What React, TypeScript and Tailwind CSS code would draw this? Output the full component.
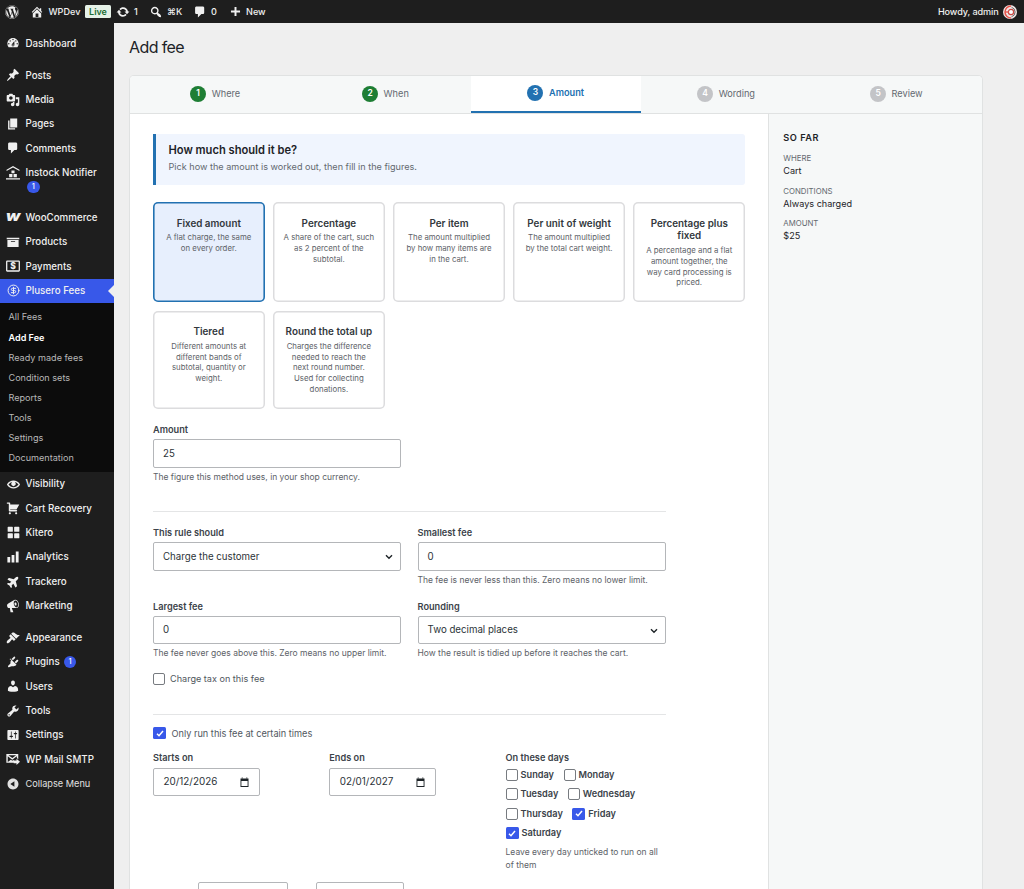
import type { ReactNode } from "react";
import { CircleDollarSign } from "lucide-react";
import { FaPlane, FaWordpress } from "react-icons/fa6";

const PATHS = {
  dashboard:
    "M3.76 16h12.48c1.1-1.37 1.76-3.11 1.76-5 0-4.42-3.58-8-8-8s-8 3.58-8 8c0 1.89.66 3.63 1.76 5zM10 4c.55 0 1 .45 1 1s-.45 1-1 1-1-.45-1-1 .45-1 1-1zM6 6c.55 0 1 .45 1 1s-.45 1-1 1-1-.45-1-1 .45-1 1-1zm8 0c.55 0 1 .45 1 1s-.45 1-1 1-1-.45-1-1 .45-1 1-1zm-5.37 5.55L12 7v6c0 1.1-.9 2-2 2s-2-.9-2-2c0-.57.24-1.08.63-1.45zM4 10c.55 0 1 .45 1 1s-.45 1-1 1-1-.45-1-1 .45-1 1-1zm12 0c.55 0 1 .45 1 1s-.45 1-1 1-1-.45-1-1 .45-1 1-1zm-5 3c0-.55-.45-1-1-1s-1 .45-1 1 .45 1 1 1 1-.45 1-1z",
  post: "M10.44 3.02l1.82-1.82 6.36 6.35-1.83 1.82c-1.05-.68-2.48-.57-3.41.36l-.75.75c-.92.93-1.04 2.35-.35 3.41l-1.83 1.82-2.41-2.41-2.8 2.79c-.42.42-3.38 2.71-3.8 2.29s1.86-3.39 2.28-3.81l2.79-2.79L4.1 9.36l1.83-1.82c1.05.69 2.48.57 3.4-.36l.75-.75c.93-.92 1.05-2.35.36-3.41z",
  media:
    "M13 11V4c0-.55-.45-1-1-1h-1.67L9 1H5L3.67 3H2c-.55 0-1 .45-1 1v7c0 .55.45 1 1 1h10c.55 0 1-.45 1-1zM7 4.5c1.38 0 2.5 1.12 2.5 2.5S8.38 9.5 7 9.5 4.5 8.38 4.5 7 5.62 4.5 7 4.5zM14 6h5v10.5c0 1.38-1.12 2.5-2.5 2.5S14 17.88 14 16.5s1.12-2.5 2.5-2.5c.17 0 .34.02.5.05V9h-3V6zm-4 8.05V13h2v3.5c0 1.38-1.12 2.5-2.5 2.5S7 17.88 7 16.5 8.12 14 9.5 14c.17 0 .34.02.5.05z",
  page: "M6 15V2h10v13H6zm-1 1h8v2H3V5h2v11z",
  comments:
    "M5 2h9c1.1 0 2 .9 2 2v7c0 1.1-.9 2-2 2h-2l-5 5v-5H5c-1.1 0-2-.9-2-2V4c0-1.1.9-2 2-2z",
  store: "M10 0L.8 5.2v2L10 2.3l9.2 4.9v-2zM7.8 6.5h4.4v4H7.8zM4.5 11.5h4.7V16H4.5zM10.8 11.5h4.7V16h-4.7zM0 17.5h20v1.8H0z",
  archive: "M19 4v2H1V4h18zM2 7h16v10H2V7zm11 3V9H7v1h6z",
  visibility:
    "M19.7 9.4C17.7 6 14 3.9 10 3.9S2.3 6 .3 9.4L0 10l.3.6c2 3.4 5.7 5.5 9.7 5.5s7.7-2.1 9.7-5.5l.3-.6-.3-.6zM10 14.1c-3.1 0-6-1.6-7.7-4.1C3.6 8 5.7 6.6 8 6.1c-.9.6-1.5 1.7-1.5 2.9 0 1.9 1.6 3.5 3.5 3.5s3.5-1.6 3.5-3.5c0-1.2-.6-2.3-1.5-2.9 2.3.5 4.4 1.9 5.7 3.9-1.7 2.5-4.6 4.1-7.7 4.1z",
  cart: "M6 13h9c.55 0 1 .45 1 1s-.45 1-1 1H5c-.55 0-1-.45-1-1V4H2c-.55 0-1-.45-1-1s.45-1 1-1h3c.55 0 1 .45 1 1v2h13l-4 7H6v1zm-.5 3c.83 0 1.5.67 1.5 1.5S6.33 19 5.5 19 4 18.33 4 17.5 4.67 16 5.5 16zm9 0c.83 0 1.5.67 1.5 1.5s-.67 1.5-1.5 1.5-1.5-.67-1.5-1.5.67-1.5 1.5-1.5z",
  grid: "M2 1h6c.55 0 1 .45 1 1v6c0 .55-.45 1-1 1H2c-.55 0-1-.45-1-1V2c0-.55.45-1 1-1zm10 0h6c.55 0 1 .45 1 1v6c0 .55-.45 1-1 1h-6c-.55 0-1-.45-1-1V2c0-.55.45-1 1-1zM2 11h6c.55 0 1 .45 1 1v6c0 .55-.45 1-1 1H2c-.55 0-1-.45-1-1v-6c0-.55.45-1 1-1zm10 0h6c.55 0 1 .45 1 1v6c0 .55-.45 1-1 1h-6c-.55 0-1-.45-1-1v-6c0-.55.45-1 1-1z",
  bars: "M18 18V2h-4v16h4zm-6 0V7H8v11h4zm-6 0v-8H2v8h4z",
  megaphone:
    "M18.15 5.94c.46 1.62.38 3.22-.02 4.48-.42 1.28-1.26 2.18-2.3 2.48-.16.06-.26.06-.4.06-.06.02-.12.02-.18.02-.06.02-.14.02-.22.02h-6.8l2.22 5.5c.02.14-.06.26-.14.34-.08.1-.24.16-.34.16H6.95c-.1 0-.26-.06-.34-.16-.08-.08-.16-.2-.14-.34l-1-5.5H4.25l-.02-.02c-.5.06-1.08-.18-1.54-.62s-.88-1.08-1.06-1.88c-.24-.8-.2-1.56-.02-2.2.18-.62.58-1.08 1.06-1.3l.02-.02 9-5.4c.1-.06.18-.1.24-.16.06-.04.14-.08.24-.12.16-.08.28-.12.5-.18 1.04-.3 2.24.1 3.22.98s1.84 2.24 2.26 3.86zm-2.58 5.98h-.02c.4-.1.74-.34 1.04-.7.58-.7.86-1.76.86-3.04 0-.64-.1-1.3-.28-1.98-.34-1.36-1.02-2.5-1.78-3.24s-1.68-1.1-2.46-.88c-.82.22-1.4.96-1.7 2-.32 1.04-.28 2.36.06 3.72.38 1.36 1 2.5 1.8 3.24.78.74 1.62 1.1 2.48.88zm-2.54-7.08c.22-.04.42-.02.62.04.38.16.76.48 1.02 1s.42 1.2.42 1.78c0 .3-.04.56-.12.8-.18.48-.44.84-.86.94-.34.1-.8-.06-1.14-.4s-.64-.86-.78-1.5c-.18-.62-.12-1.24.02-1.72s.48-.84.82-.94z",
  appearance:
    "M14.48 11.06L7.41 3.99l1.5-1.5c.5-.56 2.3-.47 3.51.32 1.21.8 1.43 1.28 2.91 2.1 1.18.64 2.45 1.26 4.45.85zm-.71.71L6.7 4.7 4.93 6.47c-.39.39-.39 1.02 0 1.41l1.06 1.06c.39.39.39 1.03 0 1.42-.6.6-1.43 1.11-2.21 1.69-.35.26-.7.53-1.01.84C1.43 14.23.4 16.08 1.4 17.07c.99 1 2.84-.03 4.18-1.36.31-.31.58-.66.85-1.02.57-.78 1.08-1.61 1.69-2.21.39-.39 1.02-.39 1.41 0l1.06 1.06c.39.39 1.02.39 1.41 0z",
  plugins:
    "M13.11 4.36L9.87 7.6 8 5.73l3.24-3.24c.35-.34 1.05-.2 1.56.32.52.51.66 1.21.31 1.55zm-8 1.77l.91-1.12 9.01 9.01-1.19.84c-.71.71-2.63 1.16-3.82 1.16H8.14L4.9 17.26c-.49.49-1.27.49-1.76 0s-.49-1.27 0-1.76l3.24-3.24v-1.88c0-1.18.4-2.57 1.11-3.28zm7.26 3.97l3.24-3.24c.34-.35 1.04-.21 1.55.31.52.51.66 1.21.31 1.55l-3.24 3.25z",
  users:
    "M10 9.25c-2.27 0-2.73-3.44-2.73-3.44C7 4.02 7.82 2 9.97 2c2.16 0 2.98 2.02 2.71 3.81 0 0-.41 3.44-2.68 3.44zm0 2.57L12.72 10c2.39 0 4.52 2.33 4.52 4.53v2.49s-3.65 1.13-7.24 1.13c-3.65 0-7.24-1.13-7.24-1.13v-2.49c0-2.25 1.94-4.48 4.47-4.48z",
  tools:
    "M16.68 9.77c-1.34 1.34-3.3 1.67-4.95.99l-5.41 6.52c-.99.99-2.59.99-3.58 0s-.99-2.59 0-3.57l6.52-5.42c-.68-1.65-.35-3.61.99-4.95 1.28-1.28 3.12-1.62 4.72-1.06l-2.89 2.89 2.82 2.82 2.86-2.87c.53 1.58.18 3.39-1.08 4.65zM3.81 16.21c.4.39 1.04.39 1.43 0 .4-.4.4-1.04 0-1.43-.39-.4-1.03-.4-1.43 0-.39.39-.39 1.03 0 1.43z",
  settings:
    "M18 16V4c0-.55-.45-1-1-1H3c-.55 0-1 .45-1 1v12c0 .55.45 1 1 1h14c.55 0 1-.45 1-1zM8 11h1c.55 0 1 .45 1 1s-.45 1-1 1H8v1.5c0 .28-.22.5-.5.5s-.5-.22-.5-.5V13H6c-.55 0-1-.45-1-1s.45-1 1-1h1V5.5c0-.28.22-.5.5-.5s.5.22.5.5V11zm5-2h-1c-.55 0-1-.45-1-1s.45-1 1-1h1V5.5c0-.28.22-.5.5-.5s.5.22.5.5V7h1c.55 0 1 .45 1 1s-.45 1-1 1h-1v5.5c0 .28-.22.5-.5.5s-.5-.22-.5-.5V9z",
  mail: "M.5 3h17v7.5l-2-2V6.2L9 11.2 2.5 6.2v8L7 11l2 1.4 2-1.2v4.3H.5zM3.5 4.5L9 8.7l5.5-4.2zM15 9.5l5 4.5-5 4.5V16h-4v-4h4z",
  collapse:
    "M10 2.16c4.33 0 7.84 3.51 7.84 7.84s-3.51 7.84-7.84 7.84S2.16 14.33 2.16 10 5.71 2.16 10 2.16zm2 11.72V6.12L6.18 9.97z",
  home: "M16 8.5l1.53 1.53-1.06 1.06L10 4.6l-6.47 6.49-1.06-1.06L10 2.5l4 4v-2h2v4zm-6-2.46l6 5.99V18H4v-5.97zM12 17v-5H8v5h4z",
  update:
    "M10.2 3.28c3.53 0 6.43 2.61 6.92 6h2.08l-3.5 4-3.5-4h2.32c-.45-1.97-2.21-3.45-4.32-3.45-1.45 0-2.73.71-3.54 1.78L4.95 5.66C6.23 4.2 8.11 3.28 10.2 3.28zm-.4 13.44c-3.52 0-6.43-2.61-6.92-6H.8l3.5-4c1.17 1.33 2.33 2.67 3.5 4H5.48c.45 1.97 2.21 3.45 4.32 3.45 1.45 0 2.73-.71 3.54-1.78l1.71 1.95c-1.28 1.46-3.15 2.38-5.25 2.38z",
  search:
    "M12.14 4.18c1.87 1.87 2.11 4.75.72 6.89.12.1.22.21.36.31.2.16.47.36.81.59.34.24.56.39.66.47.42.31.73.57.94.78.32.32.6.65.84 1 .25.35.44.69.59 1.04.14.35.21.68.18 1-.02.32-.14.59-.36.81s-.49.34-.81.36c-.31.02-.65-.04-.99-.19-.35-.14-.7-.34-1.04-.59-.35-.24-.68-.52-1-.84-.21-.21-.47-.52-.77-.93-.1-.13-.25-.35-.47-.66-.22-.32-.4-.57-.56-.78-.16-.2-.29-.35-.44-.5-2.07 1.09-4.69.76-6.44-.98-2.14-2.15-2.14-5.64 0-7.78 2.15-2.15 5.63-2.15 7.78 0zm-1.41 6.36c1.36-1.37 1.36-3.58 0-4.95-1.37-1.37-3.59-1.37-4.95 0-1.37 1.37-1.37 3.58 0 4.95 1.36 1.37 3.58 1.37 4.95 0z",
  plus: "M17 8.5v3h-5.5V17h-3v-5.5H3v-3h5.5V3h3v5.5H17z",
};

function Dashicon({ name, size = 14 }: { name: keyof typeof PATHS; size?: number }) {
  return (
    <svg width={size} height={size} viewBox="0 0 20 20" fill="currentColor" fillRule="evenodd" className="shrink-0">
      <path d={PATHS[name]} />
    </svg>
  );
}

function WooMark() {
  return <span className="scale-x-[1.25] text-center text-[11px] leading-none font-black italic">W</span>;
}

function PaymentsMark() {
  return (
    <svg width="14" height="12" viewBox="0 0 14 12" fill="currentColor">
      <rect x="0.7" y="1.2" width="12.6" height="9.8" rx="0.5" fill="none" stroke="currentColor" strokeWidth="1.3" />
      <text x="7" y="9.2" textAnchor="middle" fontSize="8.5" fontWeight="800">
        $
      </text>
    </svg>
  );
}

function Badge() {
  return (
    <span className="flex h-[12.5px] w-[12.5px] items-center justify-center rounded-full bg-[#3858e9] text-[7.5px] leading-none font-medium text-white">
      1
    </span>
  );
}

function MenuItem({ icon, label, badge }: { icon: ReactNode; label: string; badge?: boolean }) {
  return (
    <a className="flex h-[24.3px] items-center text-[9.75px] font-medium text-[#f0f0f0]">
      <span className="mr-[5.5px] ml-[6px] flex w-[14px] justify-center">{icon}</span>
      <span className="pt-[1.2px] whitespace-nowrap">{label}</span>
      {badge && (
        <span className="ml-[4px]">
          <Badge />
        </span>
      )}
    </a>
  );
}

const SUBMENU = [
  "All Fees",
  "Add Fee",
  "Ready made fees",
  "Condition sets",
  "Reports",
  "Tools",
  "Settings",
  "Documentation",
];

function Sidebar() {
  return (
    <aside className="w-[113.5px] shrink-0 bg-[#1e1e1e] pt-[8.2px]">
      <MenuItem icon={<Dashicon name="dashboard" />} label="Dashboard" />
      <div className="h-[7.8px]" />
      <MenuItem icon={<Dashicon name="post" />} label="Posts" />
      <MenuItem icon={<Dashicon name="media" />} label="Media" />
      <MenuItem icon={<Dashicon name="page" />} label="Pages" />
      <MenuItem icon={<Dashicon name="comments" />} label="Comments" />
      <div className="h-[37.4px]">
        <MenuItem icon={<Dashicon name="store" />} label="Instock Notifier" />
        <div className="-mt-[4px] pl-[27px]">
          <Badge />
        </div>
      </div>
      <div className="h-[7.8px]" />
      <MenuItem icon={<WooMark />} label="WooCommerce" />
      <MenuItem icon={<Dashicon name="archive" />} label="Products" />
      <MenuItem icon={<PaymentsMark />} label="Payments" />
      <div className="relative bg-[#3858e9]">
        <MenuItem icon={<CircleDollarSign size={13} strokeWidth={1.8} />} label="Plusero Fees" />
        <span className="absolute top-[6.5px] right-0 border-y-[6px] border-r-[6px] border-y-transparent border-r-[#efefef]" />
      </div>
      <ul className="h-[169.2px] bg-[#0c0c0c] pt-[4.4px]">
        {SUBMENU.map((item) => (
          <li
            key={item}
            className={`flex h-[20.1px] items-center pl-[8.5px] text-[9.1px] ${
              item === "Add Fee" ? "font-semibold text-white" : "text-[#b8b8b8]"
            }`}
          >
            {item}
          </li>
        ))}
      </ul>
      <MenuItem icon={<Dashicon name="visibility" size={13} />} label="Visibility" />
      <MenuItem icon={<Dashicon name="cart" />} label="Cart Recovery" />
      <MenuItem icon={<Dashicon name="grid" size={13} />} label="Kitero" />
      <MenuItem icon={<Dashicon name="bars" />} label="Analytics" />
      <MenuItem icon={<FaPlane size={13} className="-rotate-45" />} label="Trackero" />
      <MenuItem icon={<Dashicon name="megaphone" />} label="Marketing" />
      <div className="h-[7.8px]" />
      <MenuItem icon={<Dashicon name="appearance" />} label="Appearance" />
      <MenuItem icon={<Dashicon name="plugins" />} label="Plugins" badge />
      <MenuItem icon={<Dashicon name="users" />} label="Users" />
      <MenuItem icon={<Dashicon name="tools" />} label="Tools" />
      <MenuItem icon={<Dashicon name="settings" />} label="Settings" />
      <MenuItem icon={<Dashicon name="mail" />} label="WP Mail SMTP" />
      <a className="flex h-[24.3px] items-center text-[9.2px] text-[#e0e0e0]">
        <span className="mr-[5.5px] ml-[6px] flex w-[14px] justify-center">
          <Dashicon name="collapse" />
        </span>
        Collapse Menu
      </a>
    </aside>
  );
}

function AdminBar() {
  return (
    <header className="flex h-[23px] shrink-0 items-center bg-[#1e1e1e] text-[9.1px] font-medium text-[#f0f0f0]">
      <FaWordpress size={14} className="ml-[5px]" />
      <span className="ml-[11px] flex">
        <Dashicon name="home" />
      </span>
      <span className="ml-[4.5px] w-[32px]">WPDev</span>
      <span className="ml-[4.5px] flex h-[12.5px] w-[26px] items-center justify-center rounded-[1.5px] bg-[#e6f2e8] text-[9px] font-semibold text-[#1c6e33]">
        Live
      </span>
      <span className="ml-[5px] flex">
        <Dashicon name="update" />
      </span>
      <span className="ml-[4px] w-[5px]">1</span>
      <span className="ml-[10px] flex">
        <Dashicon name="search" />
      </span>
      <span className="ml-[4px] w-[16px]">⌘K</span>
      <span className="ml-[10px] flex">
        <Dashicon name="comments" />
      </span>
      <span className="ml-[4px] w-[7px]">0</span>
      <span className="ml-[10.5px] flex">
        <Dashicon name="plus" size={13} />
      </span>
      <span className="ml-[4.5px]">New</span>
      <span className="mr-[4.5px] ml-auto tracking-[-0.1px]">Howdy, admin</span>
      <svg width="14" height="14" viewBox="0 0 14 14" className="mr-[7px]">
        <circle cx="7" cy="7" r="7" fill="#f2e6e6" />
        <path d="M8 1a6 6 0 1 0 0 12" fill="none" stroke="#e5564c" strokeWidth="1.5" />
        <path d="M8.5 2.2a5 5 0 0 1 0 9.6" fill="none" stroke="#6a6a6a" strokeWidth="1" />
        <circle cx="8" cy="7" r="2.6" fill="#fff" stroke="#c94a43" strokeWidth="1.2" />
        <path d="M2 7h4" stroke="#e5564c" strokeWidth="1.3" />
      </svg>
    </header>
  );
}

const STEPS = [
  { label: "Where", state: "done" },
  { label: "When", state: "done" },
  { label: "Amount", state: "current" },
  { label: "Wording", state: "todo" },
  { label: "Review", state: "todo" },
];

function Steps() {
  return (
    <nav className="grid h-[38px] shrink-0 grid-cols-5 border-b border-[#e0e2e2] bg-[#f6f8f8]">
      {STEPS.map((step, i) => (
        <div
          key={step.label}
          className={`flex items-center justify-center gap-[5.5px] pb-[1.5px] text-[9.2px] ${
            step.state === "current"
              ? "border-b-2 border-[#2271b1] bg-white font-semibold text-[#2271b1]"
              : "text-[#646970]"
          }`}
        >
          <span
            className={`flex h-[16px] w-[16px] items-center justify-center rounded-full text-[8.5px] font-semibold text-white ${
              step.state === "done" ? "bg-[#1e7e34]" : step.state === "current" ? "bg-[#2271b1]" : "bg-[#c3c4c7]"
            }`}
          >
            {i + 1}
          </span>
          {step.label}
        </div>
      ))}
    </nav>
  );
}

const METHODS = [
  { title: "Fixed amount", lines: ["A flat charge, the same", "on every order."] },
  { title: "Percentage", lines: ["A share of the cart, such", "as 2 percent of the", "subtotal."] },
  { title: "Per item", lines: ["The amount multiplied", "by how many items are", "in the cart."] },
  { title: "Per unit of weight", lines: ["The amount multiplied", "by the total cart weight."] },
  {
    title: "Percentage plus fixed",
    lines: ["A percentage and a flat", "amount together, the", "way card processing is", "priced."],
  },
  { title: "Tiered", lines: ["Different amounts at", "different bands of", "subtotal, quantity or", "weight."] },
  {
    title: "Round the total up",
    lines: ["Charges the difference", "needed to reach the", "next round number.", "Used for collecting", "donations."],
  },
];

function MethodCard({ title, lines, selected }: { title: string; lines: string[]; selected: boolean }) {
  return (
    <div
      className={`rounded-[5px] pt-[14.3px] text-center ${
        selected
          ? "bg-[#e7effd] shadow-[inset_0_0_0_1.6px_#2271b1]"
          : "bg-white shadow-[inset_0_0_0_1.5px_#dcdcde]"
      }`}
    >
      <h3 className="px-[9px] text-[9.85px] leading-[12.8px] font-semibold text-[#32373c]">{title}</h3>
      <p className="mt-[3px] text-[7.8px] leading-[10.65px] text-[#5d6268]">
        {lines.map((line) => (
          <span key={line} className="block whitespace-nowrap">
            {line}
          </span>
        ))}
      </p>
    </div>
  );
}

function Label({ children }: { children: ReactNode }) {
  return <div className="h-[16.2px] text-[9.2px] leading-[13px] font-semibold text-[#3c434a]">{children}</div>;
}

function Help({ children }: { children: ReactNode }) {
  return <p className="mt-[3px] text-[8.5px] leading-[12.5px] text-[#5d6268]">{children}</p>;
}

function Field({ label, value, help, select }: { label: string; value: string; help?: string; select?: boolean }) {
  return (
    <div className="h-[73.5px] w-[248px]">
      <Label>{label}</Label>
      <div className="flex h-[28.5px] items-center justify-between rounded-[2px] border border-[#b4b6b9] bg-white px-[9px] pt-px text-[9.7px] text-[#2c3338]">
        {value}
        {select && (
          <svg width="8" height="6" viewBox="0 0 8 6" className="-mr-[2px]">
            <path d="M1 1.3l3 3 3-3" fill="none" stroke="#1d2327" strokeWidth="1.4" />
          </svg>
        )}
      </div>
      {help && <Help>{help}</Help>}
    </div>
  );
}

function Check({ checked }: { checked?: boolean }) {
  return checked ? (
    <span className="flex h-[12px] w-[13px] shrink-0 items-center justify-center rounded-[1.5px] bg-[#3858e9]">
      <svg width="8" height="7" viewBox="0 0 8 7">
        <path d="M1 3.7l2 2L7 1" fill="none" stroke="#fff" strokeWidth="1.5" />
      </svg>
    </span>
  ) : (
    <span className="h-[12px] w-[12px] shrink-0 rounded-[2px] border border-[#777b80] bg-white" />
  );
}

function DateField({ label, value }: { label: string; value: string }) {
  return (
    <div className="w-[176.3px]">
      <Label>{label}</Label>
      <div className="flex h-[28.5px] w-[107px] items-center justify-between rounded-[2px] border border-[#b4b6b9] pr-[10.5px] pl-[9.5px] text-[9.9px] text-[#2c3338]">
        {value}
        <svg width="9" height="10" viewBox="0 0 9 10" fill="#1d2327">
          <path d="M.5 1.5h8V10h-8zM1.4 4v5.1h6.2V4z" fillRule="evenodd" />
          <path d="M1.7.5h1v1h-1zM6.3.5h1v1h-1z" />
        </svg>
      </div>
    </div>
  );
}

function Day({ name, checked }: { name: string; checked?: boolean }) {
  return (
    <span className="flex items-center gap-[3px]">
      <Check checked={checked} />
      {name}
    </span>
  );
}

function DayPicker() {
  return (
    <div className="w-[160px]">
      <Label>On these days</Label>
      <div className="-mt-[2.7px] text-[9.2px] font-semibold text-[#3c434a]">
        <div className="flex h-[19.5px] items-center gap-[9.5px]">
          <Day name="Sunday" />
          <Day name="Monday" />
        </div>
        <div className="flex h-[19.5px] items-center gap-[9.5px]">
          <Day name="Tuesday" />
          <Day name="Wednesday" />
        </div>
        <div className="flex h-[19.5px] items-center gap-[9.5px]">
          <Day name="Thursday" />
          <Day name="Friday" checked />
        </div>
        <div className="flex h-[19.5px] items-center">
          <Day name="Saturday" checked />
        </div>
      </div>
      <p className="mt-[3.5px] text-[8.5px] leading-[12.8px] text-[#5d6268]">
        Leave every day unticked to run on all
        <br />
        of them
      </p>
    </div>
  );
}

const SUMMARY = [
  ["Where", "Cart"],
  ["Conditions", "Always charged"],
  ["Amount", "$25"],
];

function Summary() {
  return (
    <aside className="flex-1 border-l border-[#e0e2e2] bg-[#f6f8f8] pt-[17px] pl-[14px]">
      <h2 className="text-[9.2px] leading-[13px] font-semibold tracking-[0.5px] text-[#1d2327]">SO FAR</h2>
      <dl className="mt-[8px]">
        {SUMMARY.map(([term, value]) => (
          <div key={term} className="h-[32.7px]">
            <dt className="text-[7.8px] leading-[12px] text-[#646970] uppercase">{term}</dt>
            <dd className="text-[9.1px] leading-[14px] text-[#1d2327]">{value}</dd>
          </div>
        ))}
      </dl>
    </aside>
  );
}

export default function App() {
  return (
    <div className="flex h-[889px] w-[1024px] flex-col overflow-hidden bg-[#efefef] font-['Inter',sans-serif]">
      <AdminBar />
      <div className="flex min-h-0 flex-1">
        <Sidebar />
        <main className="flex min-w-0 flex-1 flex-col pl-[15.5px]">
          <h1 className="mt-[12px] h-[40px] shrink-0 text-[16px] leading-[24px] tracking-[-0.6px] text-[#1d2327]">
            Add fee
          </h1>
          <div className="flex min-h-0 w-[853.5px] flex-1 flex-col overflow-hidden rounded-t-[5px] border border-b-0 border-[#e0e2e2] bg-white">
            <Steps />
            <div className="flex min-h-0 flex-1">
              <div className="w-[638.3px] pt-[19.8px] pl-[23px]">
                <div className="h-[51px] w-[592px] rounded-r-[3px] border-l-[3px] border-[#2271b1] bg-[#f0f5fe] pt-[8.5px] pl-[12.5px]">
                  <h2 className="text-[11.15px] leading-[16px] font-semibold text-[#1d2327]">How much should it be?</h2>
                  <p className="mt-[2px] text-[9.1px] leading-[14px] text-[#646970]">
                    Pick how the amount is worked out, then fill in the figures.
                  </p>
                </div>
                <div className="mt-[17.5px] grid w-[592px] grid-cols-5 grid-rows-[100px_98px] gap-[8.6px]">
                  {METHODS.map((method, i) => (
                    <MethodCard key={method.title} title={method.title} lines={method.lines} selected={i === 0} />
                  ))}
                </div>
                <div className="mt-[14.4px]">
                  <Field label="Amount" value="25" help="The figure this method uses, in your shop currency." />
                </div>
                <div className="mt-[14px] flex w-[512.5px] flex-wrap justify-between border-t border-[#e4e5e6] pt-[14.5px]">
                  <Field label="This rule should" value="Charge the customer" select />
                  <Field label="Smallest fee" value="0" help="The fee is never less than this. Zero means no lower limit." />
                  <Field label="Largest fee" value="0" help="The fee never goes above this. Zero means no upper limit." />
                  <Field
                    label="Rounding"
                    value="Two decimal places"
                    help="How the result is tidied up before it reaches the cart."
                    select
                  />
                </div>
                <div className="flex h-[12px] items-center gap-[5px] text-[9.1px] text-[#50575e]">
                  <Check />
                  Charge tax on this fee
                </div>
                <div className="mt-[28.7px] w-[512.5px] border-t border-[#e4e5e6] pt-[12.5px]">
                  <div className="flex h-[12px] items-center gap-[5.5px] text-[9.2px] text-[#50575e]">
                    <Check checked />
                    Only run this fee at certain times
                  </div>
                  <div className="mt-[12px] flex h-[130.5px]">
                    <DateField label="Starts on" value="20/12/2026" />
                    <DateField label="Ends on" value="02/01/2027" />
                    <DayPicker />
                  </div>
                  <div className="flex gap-[28px] pl-[45px]">
                    <div className="h-[29px] w-[89.5px] rounded-[2px] border border-[#b4b6b9]" />
                    <div className="h-[29px] w-[88px] rounded-[2px] border border-[#b4b6b9]" />
                  </div>
                </div>
              </div>
              <Summary />
            </div>
          </div>
        </main>
      </div>
    </div>
  );
}
